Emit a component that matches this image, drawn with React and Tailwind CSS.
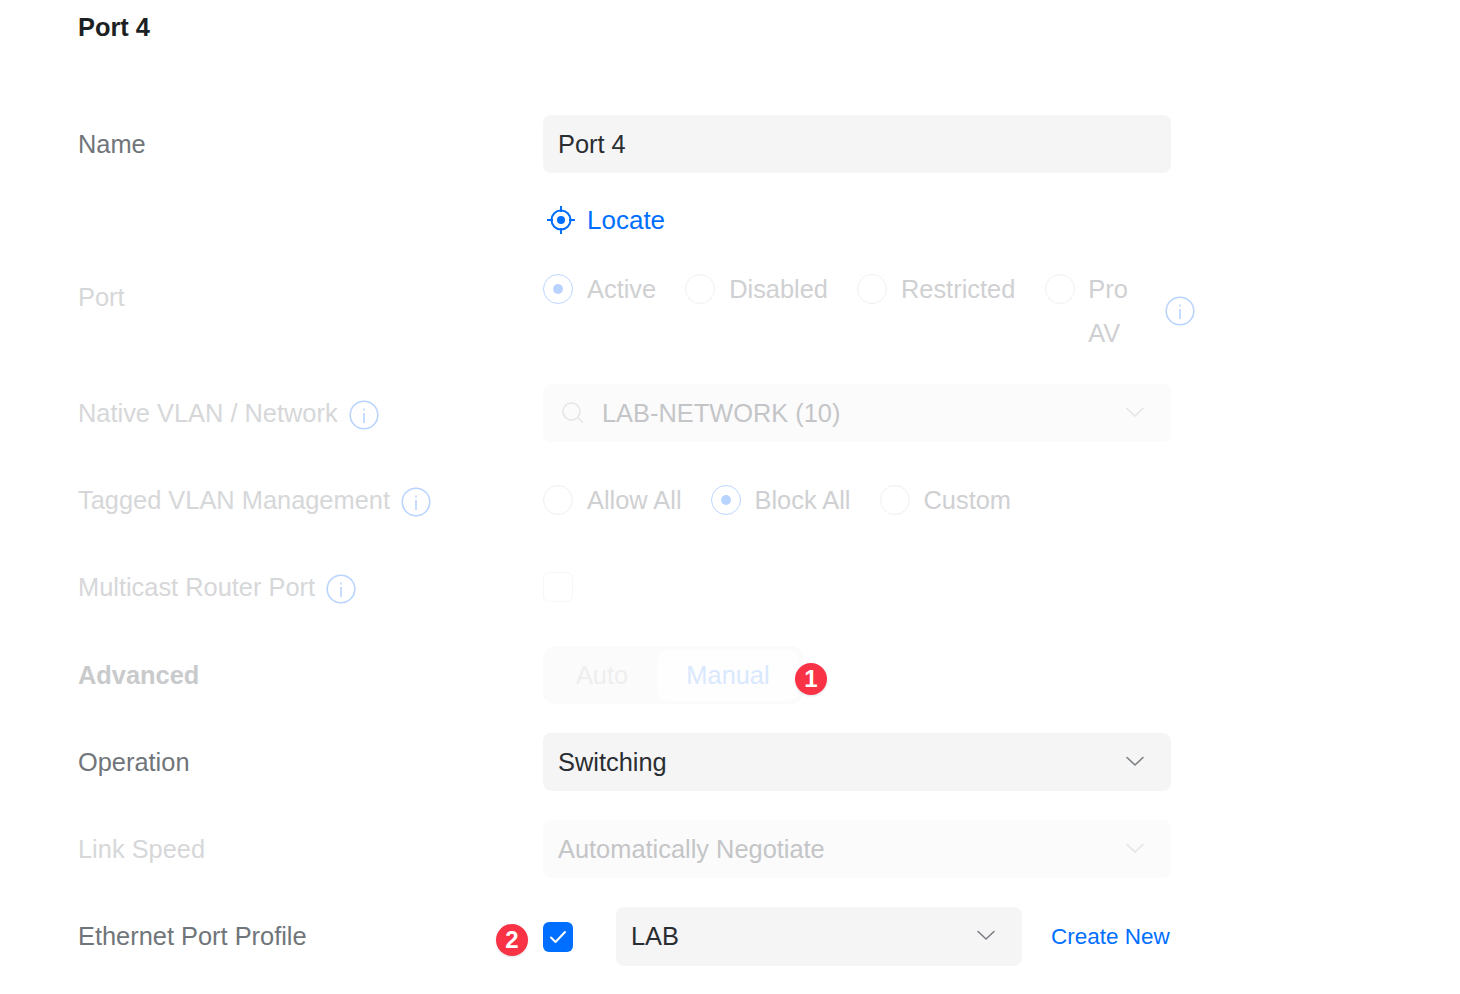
const font = "[font-family:'Liberation_Sans',Arial,sans-serif]";

function InfoIcon({ className = 'mt-[4px]' }) {
  return (
    <svg width="30" height="30" viewBox="0 0 30 30" fill="none" className={`shrink-0 ${className}`}>
      <circle cx="15" cy="15" r="13.8" stroke="#b8d4ff" strokeWidth="1.6" />
      <rect x="14.2" y="13" width="1.6" height="10" fill="#b8d4ff" />
      <rect x="14.2" y="8.5" width="1.6" height="2" fill="#b8d4ff" />
    </svg>
  );
}

function Chevron({ color = '#7c8085' }) {
  return (
    <svg width="18" height="11" viewBox="0 0 18 11" fill="none" className="shrink-0 -mt-[2px]">
      <path d="M1 1.5L9 9L17 1.5" stroke={color} strokeWidth="1.6" strokeLinecap="round" strokeLinejoin="round" />
    </svg>
  );
}

function Radio({ label, checked, className = '', gap = 'gap-[14px]' }) {
  return (
    <div className={`flex items-start ${gap} ${className}`}>
      {checked ? (
        <span className="mt-[7px] w-[30px] h-[30px] shrink-0 rounded-full border-[1.5px] border-[#bcd6ff] flex items-center justify-center">
          <span className="w-[10px] h-[10px] rounded-full bg-[#b8d3ff]" />
        </span>
      ) : (
        <span className="mt-[7px] w-[30px] h-[30px] shrink-0 rounded-full border-[1.5px] border-[#eeeff1]" />
      )}
      <span className="text-[#cfd0d2] text-[25.4px] leading-[44px]">{label}</span>
    </div>
  );
}

function Row({ label, children, labelClass = 'text-[#70757a]', mb = 'mb-[29px]', height = 'h-[58px]' }) {
  return (
    <div className={`flex items-center ${height} ${mb}`}>
      <div className={`w-[465px] shrink-0 flex items-center gap-[11px] text-[25.4px] ${labelClass}`}>{label}</div>
      <div className="w-[628px] shrink-0">{children}</div>
    </div>
  );
}

function Select({ children, disabled, className = '' }) {
  return (
    <div className={`h-[58px] rounded-lg flex items-center justify-between pl-[15px] pr-[27px] text-[25.4px] ${disabled ? 'bg-[#fbfbfc] text-[#c4c5c7]' : 'bg-[#f5f5f6] text-[#2a2d31]'} ${className}`}>
      <div className="flex items-center">{children}</div>
      <Chevron color={disabled ? '#e3e4e6' : '#7c8085'} />
    </div>
  );
}

const muted = 'text-[#d6d7d9]';

export default function App() {
  return (
    <div className={`w-[1460px] h-[994px] overflow-hidden bg-white pl-[78px] ${font}`}>
      <h1 className="pt-[7px] h-[47px] text-[25.4px] leading-[40px] font-bold text-[#1c1f23]">Port 4</h1>
      <div className="h-[68px]" />

      <Row label="Name" mb="mb-0">
        <div className="h-[58px] rounded-lg bg-[#f5f5f6] flex items-center px-[15px] text-[25.4px] text-[#2a2d31]">Port 4</div>
      </Row>

      {/* Locate */}
      <div className="flex items-center h-[40px] mt-[27px] ml-[465px] gap-[9px] text-[26px] text-[#006fff]">
        <svg width="34" height="34" viewBox="0 0 34 34" fill="none" className="ml-[1px]">
          <circle cx="17" cy="17" r="9.5" stroke="#006fff" strokeWidth="2" />
          <circle cx="17" cy="17" r="4" fill="#006fff" />
          <path d="M17 3v6M17 25v6M3 17h6M25 17h6" stroke="#006fff" strokeWidth="2" />
        </svg>
        Locate
      </div>

      {/* Port */}
      <div className="flex h-[88px] mt-[27px] mb-[29px]">
        <div className="w-[465px] shrink-0 text-[25.4px] text-[#d6d7d9] pt-[8px] leading-[44px]">Port</div>
        <div className="flex w-[628px] shrink-0">
          <Radio label="Active" checked className="mr-[29px]" />
          <Radio label="Disabled" className="mr-[29px]" />
          <Radio label="Restricted" className="mr-[30px]" />
          <Radio label={<>Pro<br />AV</>} gap="gap-[13px]" />
        </div>
        <div className="flex items-center -ml-[6px]">
          <InfoIcon className="" />
        </div>
      </div>

      <Row label={<>Native VLAN / Network <InfoIcon /></>} labelClass={muted}>
        <Select disabled>
          <svg width="22" height="21" viewBox="0 0 22 21" fill="none" className="ml-[4px] mr-[18px]">
            <circle cx="9.5" cy="9.5" r="8.5" stroke="#e4e5e7" strokeWidth="1.5" />
            <path d="M15.5 15.5l5 4.5" stroke="#e4e5e7" strokeWidth="1.5" strokeLinecap="round" />
          </svg>
          LAB-NETWORK (10)
        </Select>
      </Row>

      <Row label={<>Tagged VLAN Management <InfoIcon /></>} labelClass={muted}>
        <div className="flex gap-[29px]">
          <Radio label="Allow All" />
          <Radio label="Block All" checked />
          <Radio label="Custom" />
        </div>
      </Row>

      <Row label={<>Multicast Router Port <InfoIcon /></>} labelClass={muted} mb="mb-[30px]">
        <span className="block w-[30px] h-[30px] rounded-md border-[1.5px] border-[#f7f7f8]" />
      </Row>

      <Row label="Advanced" labelClass="text-[#c9cacc] font-bold">
        <div className="relative w-[260px] h-[58px] rounded-xl bg-[#fbfbfc] flex items-center text-[25.4px]">
          <span className="w-[114px] pl-[4px] text-center text-[#eeeeef]">Auto</span>
          <span className="w-[142px] h-[51px] rounded-xl bg-[#fefefe] flex items-center justify-center text-[#d9e8ff]">Manual</span>
          <span className="absolute left-[252px] top-[17px] w-8 h-8 rounded-full bg-[#f93345] text-white text-[24px] font-bold flex items-center justify-center shadow-sm">1</span>
        </div>
      </Row>

      <Row label="Operation">
        <Select>Switching</Select>
      </Row>

      <Row label="Link Speed" labelClass={muted}>
        <Select disabled>Automatically Negotiate</Select>
      </Row>

      <Row label="Ethernet Port Profile" height="h-[59px]">
        <div className="relative flex items-center">
          <span className="absolute -left-[47px] top-[17px] w-8 h-8 rounded-full bg-[#f93345] text-white text-[24px] font-bold flex items-center justify-center shadow-sm">2</span>
          <span className="w-[30px] h-[30px] shrink-0 rounded-md bg-[#006fff] flex items-center justify-center">
            <svg width="18" height="14" viewBox="0 0 18 14" fill="none">
              <path d="M2 7.5L6.5 12L16 2" stroke="white" strokeWidth="2" strokeLinecap="round" strokeLinejoin="round" />
            </svg>
          </span>
          <Select className="w-[406px] h-[59px] shrink-0 ml-[43px]">LAB</Select>
          <span className="ml-[29px] text-[22.5px] text-[#006fff] whitespace-nowrap">Create New</span>
        </div>
      </Row>
    </div>
  );
}
